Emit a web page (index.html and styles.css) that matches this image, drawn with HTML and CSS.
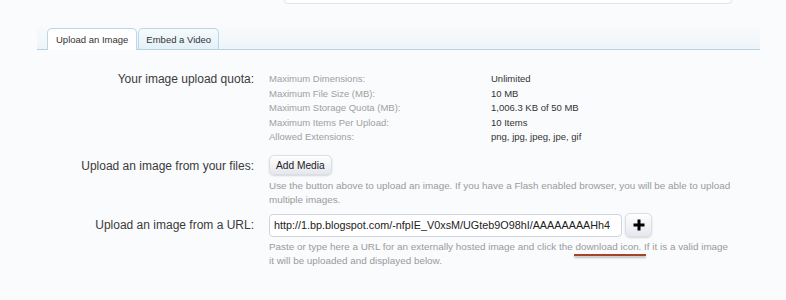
FILE: index.html
```html
<!DOCTYPE html>
<html>
<head>
<meta charset="utf-8">
<link rel="stylesheet" href="styles.css">
</head>
<body>
<div class="topbox"></div>
<div class="tabstrip">
  <ul class="tabs">
    <li class="tab active">Upload an Image</li>
    <li class="tab">Embed a Video</li>
  </ul>
</div>
<div class="form">
  <div class="row row-quota">
    <div class="label">Your image upload quota:</div>
    <div class="field">
      <dl class="quota">
        <dt>Maximum Dimensions:</dt><dd>Unlimited</dd>
        <dt>Maximum File Size (MB):</dt><dd>10 MB</dd>
        <dt>Maximum Storage Quota (MB):</dt><dd>1,006.3 KB of 50 MB</dd>
        <dt>Maximum Items Per Upload:</dt><dd>10 Items</dd>
        <dt>Allowed Extensions:</dt><dd>png, jpg, jpeg, jpe, gif</dd>
      </dl>
    </div>
  </div>
  <div class="row row-files">
    <div class="label">Upload an image from your files:</div>
    <div class="field">
      <button class="btn">Add Media</button>
      <p class="explain">Use the button above to upload an image. If you have a Flash enabled browser, you will be able to upload<br>multiple images.</p>
    </div>
  </div>
  <div class="row row-url">
    <div class="label">Upload an image from a URL:</div>
    <div class="field">
      <div class="urlline">
        <input class="url" type="text" value="http://1.bp.blogspot.com/-nfpIE_V0xsM/UGteb9O98hI/AAAAAAAAHh4">
        <button class="btn plus"><svg width="12" height="12" viewBox="0 0 12 12"><path d="M6 0.5V11.5M0.5 6H11.5" stroke="#000" stroke-width="3"/></svg></button>
      </div>
      <p class="explain">Paste or type here a URL for an externally hosted image and click the <span class="mark">download icon.</span> If it is a valid image<br>it will be uploaded and displayed below.</p>
    </div>
  </div>
</div>
</body>
</html>
```
FILE: styles.css
```css
html, body {
  margin: 0;
  padding: 0;
  background: #fafbfd;
  font-family: "Liberation Sans", Arial, sans-serif;
  color: #333;
}
.topbox {
  margin-left: 284px;
  width: 446px;
  height: 3px;
  background: #fff;
  border: 1px solid #e2e4ea;
  border-top: none;
  border-radius: 0 0 4px 4px;
}
.tabstrip {
  margin: 20px 0 0 37px;
  width: 723px;
  height: 25px;
  background: linear-gradient(to bottom, rgba(237,246,251,0) 0%, #edf5fa 100%);
  border-bottom: 1px solid #b9d0de;
  display: flex;
  align-items: flex-end;
}
.tabs {
  list-style: none;
  margin: 0 0 -1px 10px;
  padding: 0;
  display: flex;
  gap: 1px;
}
.tab {
  height: 20px;
  line-height: 21px;
  padding: 0 7px;
  font-size: 9.5px;
  color: #333;
  border: 1px solid #bcd6e6;
  border-bottom: none;
  border-radius: 5px 5px 0 0;
  background: linear-gradient(to bottom, #f6fafd, #e3f0f8);
}
.tab.active {
  background: #fff;
  height: 21px;
  padding: 0 8px 0 8px;
}
.form {
  margin-top: 22px;
}
.row {
  display: grid;
  grid-template-columns: 254px 1fr;
  column-gap: 15px;
}
.label {
  text-align: right;
  font-size: 12px;
  color: #3a3a3a;
}
.row-quota .label { padding-top: 0; }
.quota {
  margin: 0;
  display: grid;
  grid-template-columns: 222px 1fr;
  font-size: 9.5px;
  line-height: 14.5px;
}
.quota dt { color: #a0a0a0; }
.quota dd { margin: 0; color: #333; }
.row-files { margin-top: 10px; }
.row-files .label { padding-top: 4px; }
.btn {
  font-family: "Liberation Sans", Arial, sans-serif;
  font-size: 10.2px;
  color: #222;
  height: 20px;
  padding: 0 6px;
  border: 1px solid #dcdde5;
  border-radius: 5px;
  background: linear-gradient(to bottom, #ffffff, #e6e7ef);
  box-shadow: 0 1px 2px rgba(0,0,0,0.15);
}
.explain {
  margin: 4px 0 0;
  font-size: 9.9px;
  line-height: 14px;
  color: #9a9a9a;
  white-space: nowrap;
}
.row-url { margin-top: 6px; }
.row-url .label { padding-top: 5px; }
.urlline {
  display: flex;
  align-items: center;
  gap: 3px;
}
.url {
  width: 353px;
  height: 23px;
  box-sizing: border-box;
  padding: 0 4px;
  border: 1px solid #d0d4de;
  border-radius: 4px;
  background: #fff;
  font-family: "Liberation Sans", Arial, sans-serif;
  font-size: 10.8px;
  color: #222;
}
.plus {
  width: 27px;
  height: 24px;
  padding: 0;
  display: flex;
  align-items: center;
  justify-content: center;
}
.row-url .explain { margin-top: 3px; }
.mark {
  position: relative;
}
.mark::after {
  content: "";
  position: absolute;
  left: -1px;
  right: -5px;
  bottom: -4px;
  height: 2px;
  background: #a8432b;
  box-shadow: 0 2px 2px rgba(0,0,0,0.25);
}
```
